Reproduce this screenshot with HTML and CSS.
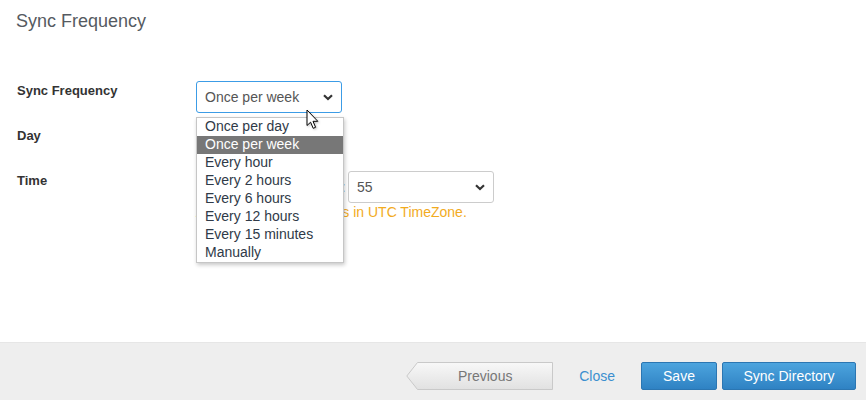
FILE: index.html
```html
<!DOCTYPE html>
<html>
<head>
<meta charset="utf-8">
<title>Sync Frequency</title>
<link rel="stylesheet" href="styles.css">
</head>
<body>
<div class="page">
  <div class="content">
    <h1 class="title">Sync Frequency</h1>
    <div class="form">
      <div class="label">Sync Frequency</div>
      <div class="field">
        <div class="select-wrap">
          <div class="select focused">
            <span>Once per week</span>
            <svg class="chev" width="10" height="7" viewBox="0 0 10 7"><path d="M1 1.2 L5 5 L9 1.2" fill="none" stroke="#333" stroke-width="2.2"/></svg>
          </div>
          <div class="listbox">
            <div class="opt">Once per day</div>
            <div class="opt sel">Once per week</div>
            <div class="opt">Every hour</div>
            <div class="opt">Every 2 hours</div>
            <div class="opt">Every 6 hours</div>
            <div class="opt">Every 12 hours</div>
            <div class="opt">Every 15 minutes</div>
            <div class="opt">Manually</div>
          </div>
          <svg class="cursor" width="14" height="21" viewBox="0 0 14 21"><path d="M1 1 L1 16.5 L4.6 13.2 L7.2 19.3 L9.6 18.3 L7 12.3 L11.8 12.3 Z" fill="#fff" stroke="#000" stroke-width="1" stroke-linejoin="round"/></svg>
        </div>
      </div>

      <div class="label">Day</div>
      <div class="field">
        <div class="select">
          <span></span>
          <svg class="chev" width="10" height="7" viewBox="0 0 10 7"><path d="M1 1.2 L5 5 L9 1.2" fill="none" stroke="#333" stroke-width="2.2"/></svg>
        </div>
      </div>

      <div class="label">Time</div>
      <div class="field">
        <div class="time-row">
          <div class="select hour">
            <span></span>
            <svg class="chev" width="10" height="7" viewBox="0 0 10 7"><path d="M1 1.2 L5 5 L9 1.2" fill="none" stroke="#333" stroke-width="2.2"/></svg>
          </div>
          <span class="colon">:</span>
          <div class="select minute">
            <span>55</span>
            <svg class="chev" width="10" height="7" viewBox="0 0 10 7"><path d="M1 1.2 L5 5 L9 1.2" fill="none" stroke="#333" stroke-width="2.2"/></svg>
          </div>
        </div>
        <div class="note">All scheduled sync times in UTC TimeZone.</div>
      </div>
    </div>
  </div>
  <div class="footer">
    <button class="btn prev">
      <svg class="prev-shape" width="148" height="28" viewBox="0 0 148 28" preserveAspectRatio="none">
        <defs>
          <linearGradient id="pg" x1="0" y1="0" x2="0" y2="1">
            <stop offset="0" stop-color="#f8f8f8"/>
            <stop offset="1" stop-color="#e1e1e1"/>
          </linearGradient>
        </defs>
        <path d="M11.5 0.5 L146.5 0.5 L146.5 27.5 L11.5 27.5 L0.8 14 Z" fill="url(#pg)" stroke="#c9c9c9" stroke-width="1"/>
      </svg>
      <span class="prev-text">Previous</span>
    </button>
    <a class="close" href="#">Close</a>
    <button class="btn primary save">Save</button>
    <button class="btn primary sync">Sync Directory</button>
  </div>
</div>
</body>
</html>
```

FILE: styles.css
```css
* { box-sizing: border-box; }
html, body {
  margin: 0;
  padding: 0;
  background: #fff;
  font-family: "Liberation Sans", Arial, sans-serif;
}
.page {
  width: 866px;
  height: 400px;
  display: flex;
  flex-direction: column;
  overflow: hidden;
}
.content {
  flex: 1;
  padding: 10px 16px 0 16px;
}
.title {
  margin: 0;
  font-size: 18px;
  line-height: 22px;
  font-weight: normal;
  color: #555a61;
}
.form {
  margin-top: 49px;
  display: grid;
  grid-template-columns: 180px 300px;
  row-gap: 13px;
}
.label {
  padding-left: 1px;
  padding-top: 2px;
  font-size: 13px;
  line-height: 16px;
  font-weight: bold;
  color: #333;
}
.field {
  position: relative;
}
.select-wrap {
  position: relative;
  width: 146px;
}
.select {
  width: 146px;
  height: 32px;
  border: 1px solid #ccc;
  border-radius: 3px;
  background: #fff;
  display: flex;
  align-items: center;
  justify-content: space-between;
  padding: 0 8px 0 8px;
  font-size: 14px;
  color: #555;
}
.select.focused {
  border-color: #3c9ce6;
}
.chev { display: block; }
.time-row {
  display: flex;
  align-items: center;
}
.hour { width: 143px; }
.colon {
  width: 9px;
  text-align: center;
  font-size: 14px;
  color: #555;
}
.minute { width: 146px; }
.note {
  margin-top: 1px;
  font-size: 14px;
  line-height: 17px;
  color: #f2ab1e;
  white-space: nowrap;
}
.listbox {
  position: absolute;
  left: 0;
  top: 36px;
  width: 148px;
  border: 1px solid #c6c6c6;
  background: #fff;
  box-shadow: 1px 2px 4px rgba(0,0,0,0.22);
  z-index: 5;
}
.opt {
  height: 18px;
  line-height: 17px;
  padding-left: 8px;
  font-size: 14px;
  color: #2f3a48;
  white-space: nowrap;
}
.opt.sel {
  background: #777;
  color: #fff;
}
.cursor {
  position: absolute;
  left: 110px;
  top: 28px;
  z-index: 10;
  filter: drop-shadow(1px 1px 1px rgba(0,0,0,0.25));
}
.footer {
  height: 58px;
  background: #eee;
  border-top: 1px solid #e6e6e6;
  display: flex;
  justify-content: flex-end;
  align-items: flex-start;
  padding: 19px 10px 0 0;
}
.btn {
  height: 28px;
  font-family: "Liberation Sans", Arial, sans-serif;
  font-size: 14px;
  padding: 0;
  margin: 0;
  cursor: pointer;
}
.prev {
  position: relative;
  width: 148px;
  border: none;
  background: transparent;
  color: #777;
}
.prev-shape {
  position: absolute;
  left: 0;
  top: 0;
}
.prev-text {
  position: relative;
  padding-left: 10px;
}
.close {
  margin-left: 25px;
  margin-right: 26px;
  line-height: 28px;
  font-size: 14px;
  color: #3b8fcf;
  text-decoration: none;
}
.primary {
  color: #fff;
  border: 1px solid #2b76b2;
  border-radius: 2px;
  background: linear-gradient(#4ca4de, #2f82c3);
}
.save { width: 76px; }
.sync { width: 134px; margin-left: 5px; }
```
